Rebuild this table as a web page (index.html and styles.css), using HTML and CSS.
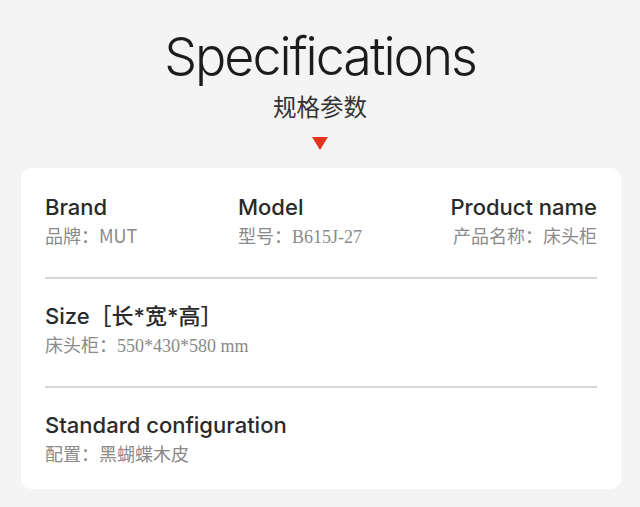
FILE: index.html
```html
<!DOCTYPE html>
<html lang="zh-CN">
<head>
<meta charset="utf-8">
<title>Specifications</title>
<link rel="stylesheet" href="styles.css">
</head>
<body>
<header class="header">
  <h1 class="title">Specifications</h1>
  <p class="subtitle">规格参数</p>
  <div class="arrow"></div>
</header>
<section class="card">
  <div class="row row-cols">
    <div class="item">
      <div class="label">Brand</div>
      <div class="value">品牌：MUT</div>
    </div>
    <div class="item">
      <div class="label">Model</div>
      <div class="value">型号：<span class="serif">B615J-27</span></div>
    </div>
    <div class="item item-right">
      <div class="label">Product name</div>
      <div class="value">产品名称：床头柜</div>
    </div>
  </div>
  <div class="row">
    <div class="label">Size［长*宽*高］</div>
    <div class="value">床头柜：<span class="serif">550*430*580 mm</span></div>
  </div>
  <div class="row row-last">
    <div class="label">Standard configuration</div>
    <div class="value">配置：黑蝴蝶木皮</div>
  </div>
</section>
</body>
</html>
```
FILE: styles.css
```css
html, body {
  margin: 0;
  padding: 0;
}
body {
  background: #f4f4f4;
  font-family: Inter, "Noto Sans CJK SC", sans-serif;
  color: #333;
  width: 640px;
  height: 507px;
  overflow: hidden;
}
.header {
  display: flex;
  flex-direction: column;
  align-items: center;
  padding-top: 31px;
}
.title {
  margin: 0;
  font-family: Inter, sans-serif;
  font-weight: 300;
  font-size: 52px;
  line-height: 52px;
  letter-spacing: -2px;
  color: #1c1c1c;
}
.subtitle {
  margin: 12px 0 0;
  font-family: "Noto Sans CJK SC", sans-serif;
  font-size: 23.5px;
  line-height: 23px;
  color: #333;
}
.arrow {
  margin-top: 19px;
  width: 0;
  height: 0;
  border-left: 8px solid transparent;
  border-right: 8px solid transparent;
  border-top: 13px solid #e0321c;
}
.card {
  margin: 18px 19px 0 21px;
  background: #fff;
  border-radius: 10px;
  padding: 2px 24px 0;
}
.row {
  padding: 24px 0 30px;
  border-bottom: 2px solid #d6d6d6;
}
.row-last {
  border-bottom: none;
  padding-bottom: 24px;
}
.row-cols {
  display: grid;
  grid-template-columns: 193px 1fr auto;
}
.item-right {
  text-align: right;
}
.label {
  font-family: Inter, "Noto Sans CJK SC", sans-serif;
  font-weight: 500;
  font-size: 22px;
  line-height: 26px;
  color: #2a2a2a;
}
.value {
  margin-top: 3px;
  font-family: "Noto Sans CJK SC", sans-serif;
  font-size: 18px;
  line-height: 24px;
  height: 24px;
  color: #8a8a8a;
}
.serif {
  font-family: "Liberation Serif", serif;
  font-size: 18px;
  line-height: 1;
}
```
